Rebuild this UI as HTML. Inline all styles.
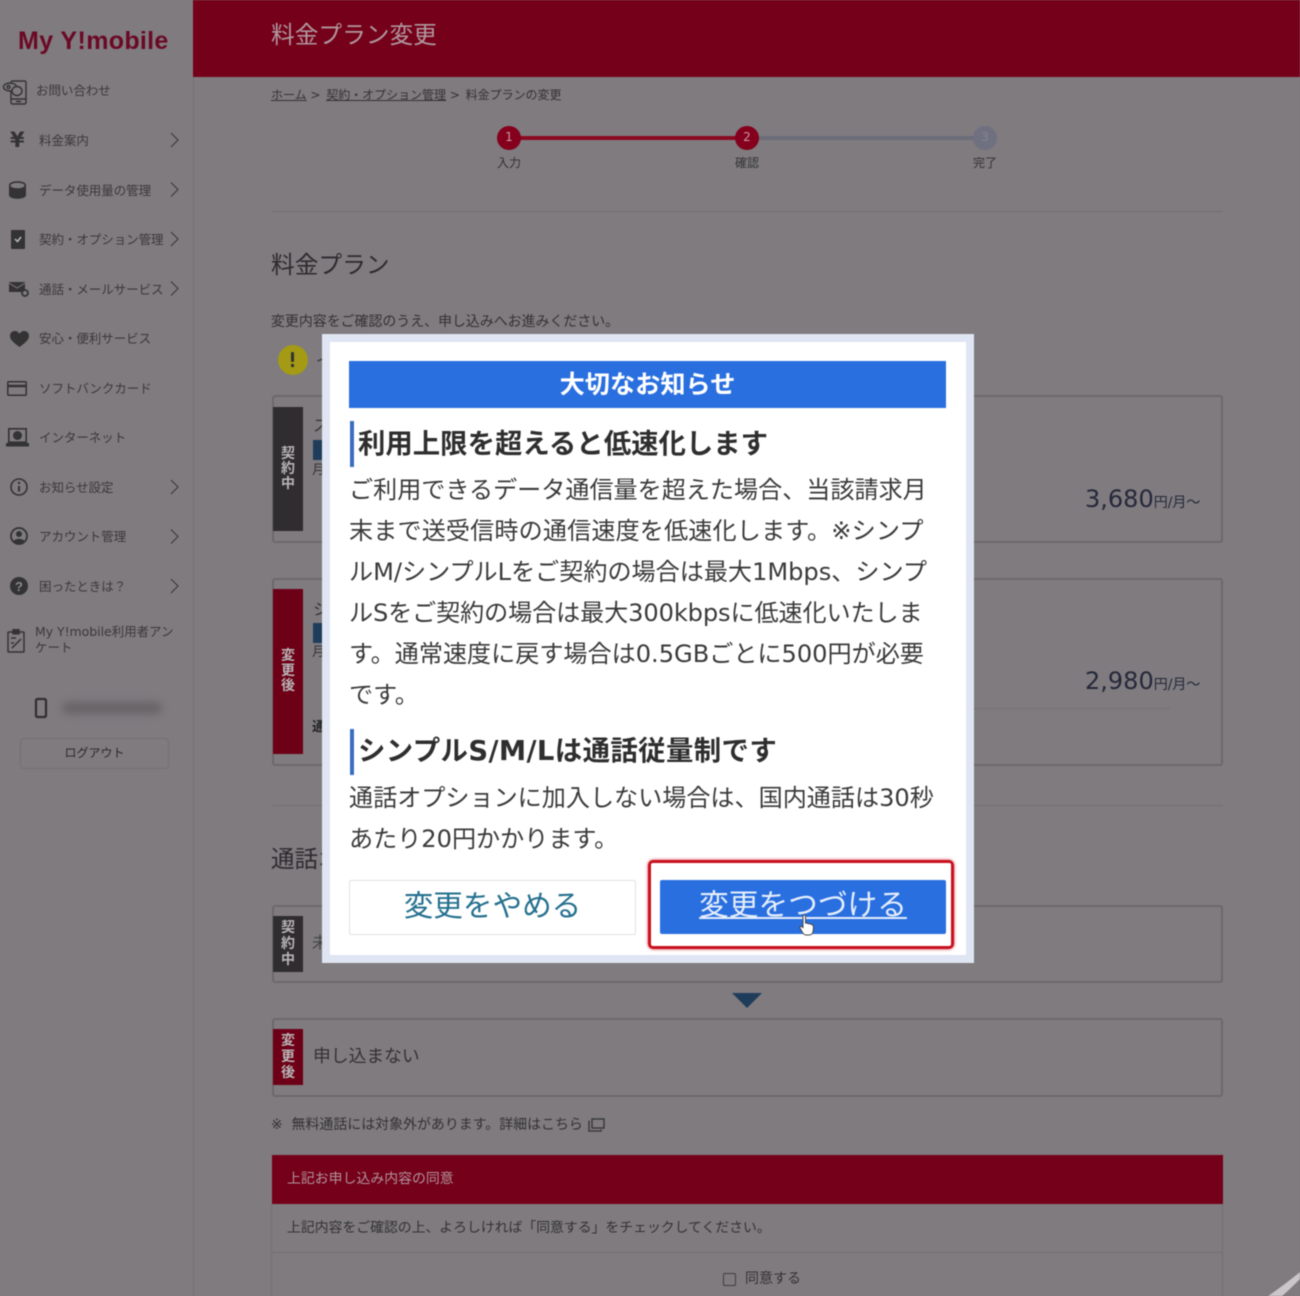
<!DOCTYPE html>
<html lang="ja"><head><meta charset="utf-8"><title>料金プラン変更</title>
<style>
html,body{margin:0;padding:0}
html{background:#7f7b7f}
body{width:1300px;height:1296px;position:relative;overflow:hidden;background:#7f7b7f;font-family:"DejaVu Sans","Noto Sans CJK JP",sans-serif;color:#353336;filter:blur(.4px)}
.t{position:absolute;white-space:nowrap;line-height:1.2;font-family:"DejaVu Sans","Noto Sans CJK JP",sans-serif}
.b{position:absolute;box-sizing:border-box}
.nav{font-size:12.5px;color:#3b393c;letter-spacing:-.05px}
.box{position:absolute;box-sizing:border-box;border:2px solid #6c696d;border-radius:3px;left:272px;width:951px}
.tag{position:absolute;left:273px;width:30px;color:#b7b4b6;font-size:14px;font-weight:700;line-height:15px;text-align:center;display:flex;align-items:center;justify-content:center}
.m{position:absolute;left:349px;white-space:nowrap;font-size:24.1px;line-height:41px;color:#3a3a3a;font-family:"DejaVu Sans","Noto Sans CJK JP",sans-serif}
.h{position:absolute;left:358px;white-space:nowrap;font-size:27.4px;font-weight:700;line-height:40px;color:#2e2e2e}
.bar{position:absolute;left:350px;width:4px;height:46px;background:#3a6dc0}
svg{position:absolute;overflow:visible}
</style></head><body>

<!-- sidebar -->
<div class="b" style="left:193px;top:0;width:1px;height:1296px;background:#757276"></div>
<div class="t" style="left:18px;top:26px;font-size:25px;font-weight:700;color:#6b0925;font-family:'Liberation Sans',sans-serif;letter-spacing:.4px;line-height:30px">My Y!<span style="letter-spacing:.3px">mobile</span></div>

<svg style="left:3px;top:80px" width="24" height="25" viewBox="0 0 24 25" fill="none" stroke="#333" stroke-width="1.4"><rect x="8" y="1" width="15" height="23" rx="1.5"/><path d="M8 19h15M13 21.500h5"/><ellipse cx="7" cy="7" rx="6.500" ry="4" fill="#7f7b7f"/><circle cx="5.500" cy="7" r="1.500"/><ellipse cx="14" cy="11" rx="5" ry="4.500" fill="#7f7b7f"/></svg>
<div class="t nav" style="left:36px;top:83px">お問い合わせ</div>

<div class="t" style="left:10px;top:127px;font-size:21px;color:#333;line-height:26px;font-weight:700">¥</div>
<div class="t nav" style="left:39px;top:133px">料金案内</div>

<svg style="left:9px;top:181px" width="17" height="18" viewBox="0 0 17 18"><path d="M0 4c0-5 17-5 17 0v10c0 5-17 5-17 0z" fill="#333"/><ellipse cx="8.500" cy="4.500" rx="7" ry="2.800" fill="#7f7b7f"/></svg>
<div class="t nav" style="left:39px;top:183px">データ使用量の管理</div>

<svg style="left:11px;top:230px" width="14" height="19" viewBox="0 0 14 19"><rect width="14" height="19" rx="1" fill="#333"/><path d="M4 9l2.500 2.500L10 7" stroke="#bbb" stroke-width="1.500" fill="none"/></svg>
<div class="t nav" style="left:39px;top:232px">契約・オプション管理</div>

<svg style="left:9px;top:282px" width="20" height="15" viewBox="0 0 20 15"><path d="M0 0h16v10H0z" fill="#333"/><path d="M0 1l8 5 8-5" stroke="#7f7b7f" fill="none"/><circle cx="16" cy="11" r="3" fill="#7f7b7f" stroke="#333" stroke-width="1.800"/></svg>
<div class="t nav" style="left:39px;top:282px">通話・メールサービス</div>

<svg style="left:10px;top:331px" width="19" height="16" viewBox="0 0 19 16"><path d="M9.500 16C4 12 0 9 0 4.800 0 2 2.200 0 4.800 0c2 0 3.700 1 4.700 2.800C10.500 1 12.200 0 14.200 0 16.800 0 19 2 19 4.800 19 9 15 12 9.500 16z" fill="#333"/></svg>
<div class="t nav" style="left:39px;top:331px">安心・便利サービス</div>

<svg style="left:7px;top:381px" width="20" height="15" viewBox="0 0 20 15" fill="none" stroke="#333" stroke-width="1.500"><rect x=".8" y=".8" width="18.400" height="13.400" rx="1"/><path d="M1 5h18" stroke-width="2.500"/></svg>
<div class="t nav" style="left:39px;top:381px">ソフトバンクカード</div>

<svg style="left:6px;top:428px" width="23" height="20" viewBox="0 0 23 20"><rect x="2.800" y=".8" width="17.400" height="13.400" fill="none" stroke="#333" stroke-width="1.600"/><circle cx="11.500" cy="7.500" r="4.500" fill="#333"/><rect y="15" width="23" height="3.500" fill="#333"/></svg>
<div class="t nav" style="left:39px;top:430px">インターネット</div>

<svg style="left:10px;top:478px" width="18" height="18" viewBox="0 0 18 18"><circle cx="9" cy="9" r="8" fill="none" stroke="#333" stroke-width="1.600"/><path d="M9 8v5.500" stroke="#333" stroke-width="2"/><circle cx="9" cy="5" r="1.200" fill="#333"/></svg>
<div class="t nav" style="left:39px;top:480px">お知らせ設定</div>

<svg style="left:10px;top:527px" width="18" height="18" viewBox="0 0 18 18"><circle cx="9" cy="9" r="8" fill="none" stroke="#333" stroke-width="1.800"/><circle cx="9" cy="7" r="3" fill="#333"/><path d="M3.500 14.500C4.500 11 13.500 11 14.500 14.500 12 17.500 6 17.500 3.500 14.500z" fill="#333"/></svg>
<div class="t nav" style="left:39px;top:529px">アカウント管理</div>

<svg style="left:10px;top:577px" width="18" height="18" viewBox="0 0 18 18"><circle cx="9" cy="9" r="9" fill="#333"/><text x="9" y="14" text-anchor="middle" font-size="13" font-weight="700" fill="#8b888b" font-family="Liberation Sans">?</text></svg>
<div class="t nav" style="left:39px;top:579px">困ったときは？</div>

<svg style="left:7px;top:629px" width="18" height="24" viewBox="0 0 18 24" fill="none" stroke="#333" stroke-width="1.500"><rect x="1" y="3" width="16" height="20" rx="1"/><rect x="6" y=".8" width="6" height="4" fill="#333"/><path d="M4 9h5M4 14h3M5 19l9-9" /></svg>
<div class="t nav" style="left:35px;top:624px;line-height:16px">My Y!mobile利用者アン<br>ケート</div>

<svg style="left:170px;top:133px" width="8" height="420" viewBox="0 0 8 420" fill="none" stroke="#3b393c" stroke-width="1.100">
<path d="M1 0l7 7-7 7M1 49.500l7 7-7 7M1 99l7 7-7 7M1 148.500l7 7-7 7" />
</svg>
<svg style="left:170px;top:480px" width="8" height="114" viewBox="0 0 8 114" fill="none" stroke="#3b393c" stroke-width="1.100"><path d="M1 0l7 7-7 7M1 49.500l7 7-7 7M1 99l7 7-7 7"/></svg>

<svg style="left:35px;top:698px" width="12" height="20" viewBox="0 0 12 20"><rect x="1" y="1" width="10" height="18" rx="1.500" fill="none" stroke="#2f2e31" stroke-width="2.200"/></svg>
<div class="b" style="left:62px;top:702px;width:100px;height:12px;background:#686467;border-radius:6px;filter:blur(4px)"></div>
<div class="b" style="left:20px;top:738px;width:149px;height:31px;border:1px solid #737074;border-radius:4px"></div>
<div class="t" style="left:20px;top:746px;width:149px;text-align:center;font-size:12px;color:#2a292c">ログアウト</div>

<!-- header -->
<div class="b" style="left:193px;top:0;width:1107px;height:77px;background:#75001a"></div>
<div class="t" style="left:271px;top:20px;font-size:23.7px;color:#b0989f;line-height:30px">料金プラン変更</div>

<!-- breadcrumb -->
<div class="t" style="left:271px;top:87px;font-size:12px;color:#333;line-height:16px;letter-spacing:-.02px"><u>ホーム</u> &gt; <span style="margin-left:2px"><u>契約・オプション管理</u></span> &gt; <span style="margin-left:2px">料金プランの変更</span></div>

<!-- steps -->
<div class="b" style="left:509px;top:136px;width:238px;height:4px;background:#8a0a20"></div>
<div class="b" style="left:747px;top:136px;width:238px;height:4px;background:#6c6d7a"></div>
<div class="b" style="left:497px;top:126px;width:24px;height:24px;border-radius:50%;background:#85001c"></div>
<div class="b" style="left:735px;top:126px;width:24px;height:24px;border-radius:50%;background:#85001c"></div>
<div class="b" style="left:973px;top:126px;width:24px;height:24px;border-radius:50%;background:#6f7080"></div>
<div class="t" style="left:497px;top:130px;width:24px;text-align:center;font-size:12px;color:#c79aa5;line-height:15px">1</div>
<div class="t" style="left:735px;top:130px;width:24px;text-align:center;font-size:12px;color:#c79aa5;line-height:15px">2</div>
<div class="t" style="left:973px;top:130px;width:24px;text-align:center;font-size:12px;color:#84859a;line-height:15px">3</div>
<div class="t" style="left:497px;top:156px;width:24px;text-align:center;font-size:12px;line-height:15px;color:#333">入力</div>
<div class="t" style="left:735px;top:156px;width:24px;text-align:center;font-size:12px;line-height:15px;color:#333">確認</div>
<div class="t" style="left:973px;top:156px;width:24px;text-align:center;font-size:12px;line-height:15px;color:#333">完了</div>

<div class="b" style="left:272px;top:211px;width:951px;height:1px;background:#737074"></div>
<div class="t" style="left:271px;top:249px;font-size:23.7px;line-height:32px;color:#2c2b2e">料金プラン</div>
<div class="t" style="left:271px;top:313px;font-size:13.93px;line-height:18px;color:#333">変更内容をご確認のうえ、申し込みへお進みください。</div>

<!-- warning -->
<div class="b" style="left:278px;top:345px;width:30px;height:30px;border-radius:50%;background:#a49a14"></div>
<div class="b" style="left:291px;top:352px;width:3px;height:10px;background:#333;border-radius:1px"></div>
<div class="b" style="left:291px;top:364px;width:3px;height:3px;background:#333"></div>
<div class="t" style="left:316px;top:351px;font-size:16px;line-height:20px;color:#333">イ</div>

<!-- plan boxes -->
<div class="box" style="top:395px;height:148px"></div>
<div class="tag" style="top:407px;height:124px;background:#2f2d30">契<br>約<br>中</div>
<div class="t" style="left:313px;top:416px;font-size:16px;line-height:20px;color:#333">ス</div>
<div class="b" style="left:313px;top:440px;width:12px;height:20px;background:#1f3d5a"></div>
<div class="t" style="left:1085px;top:484px;font-size:24px;line-height:30px;color:#25283a">3,680<span style="font-size:14px">円/月～</span></div>

<div class="box" style="top:578px;height:188px"></div>
<div class="tag" style="top:589px;height:165px;background:#6d0017">変<br>更<br>後</div>
<div class="t" style="left:313px;top:600px;font-size:16px;line-height:20px;color:#333">シ</div>
<div class="b" style="left:313px;top:623px;width:12px;height:20px;background:#1f3d5a"></div>
<div class="t" style="left:1085px;top:666px;font-size:24px;line-height:30px;color:#25283a">2,980<span style="font-size:14px">円/月～</span></div>
<div class="b" style="left:974px;top:708px;width:196px;border-top:1px dotted #6c696d"></div>
<div class="t" style="left:312px;top:720px;font-size:13px;font-weight:700;color:#222">通</div>
<div class="t" style="left:312px;top:463px;font-size:13px;color:#333">月</div>
<div class="t" style="left:312px;top:645px;font-size:13px;color:#333">月</div>

<div class="b" style="left:272px;top:805px;width:951px;height:1px;background:#737074"></div>
<div class="t" style="left:271px;top:843px;font-size:23.5px;line-height:32px;color:#2c2b2e">通話オプション</div>

<div class="box" style="top:905px;height:78px"></div>
<div class="tag" style="top:916px;height:56px;background:#2f2d30;line-height:16px">契<br>約<br>中</div>
<div class="t" style="left:312px;top:933px;font-size:16px;color:#444">未</div>
<svg style="left:732px;top:993px" width="30" height="15" viewBox="0 0 30 15"><path d="M0 0h30L15 15z" fill="#1f3d5a"/></svg>

<div class="box" style="top:1018px;height:79px"></div>
<div class="tag" style="top:1029px;height:56px;background:#6d0017;line-height:16px">変<br>更<br>後</div>
<div class="t" style="left:313px;top:1045px;font-size:17.8px;line-height:24px;color:#333">申し込まない</div>

<div class="t" style="left:271px;top:1116px;font-size:13.95px;line-height:18px;color:#333">※ &nbsp;無料通話には対象外があります。詳細はこちら</div>
<svg style="left:588px;top:1118px" width="17" height="14" viewBox="0 0 17 14" fill="none" stroke="#333" stroke-width="1.300"><rect x="4" y="1" width="12" height="9"/><path d="M2 3.500H1V13h12v-1.500"/></svg>

<div class="b" style="left:272px;top:1155px;width:951px;height:49px;background:#75001a"></div>
<div class="t" style="left:287px;top:1170px;font-size:13.9px;line-height:18px;color:#b0939a">上記お申し込み内容の同意</div>
<div class="b" style="left:271px;top:1204px;width:1px;height:92px;background:#737074"></div>
<div class="b" style="left:1222px;top:1204px;width:1px;height:92px;background:#737074"></div>
<div class="t" style="left:287px;top:1219px;font-size:13.85px;line-height:18px;color:#333">上記内容をご確認の上、よろしければ「同意する」をチェックしてください。</div>
<div class="b" style="left:272px;top:1252px;width:951px;height:1px;background:#737074"></div>
<div class="b" style="left:723px;top:1273px;width:13px;height:13px;border:1px solid #3f3d40;border-radius:2px"></div>
<div class="t" style="left:745px;top:1270px;font-size:14px;line-height:18px;color:#333">同意する</div>
<svg style="left:1268px;top:1272px" width="32" height="24" viewBox="0 0 32 24"><path d="M0 24C12 16 22 8 32 0v7C26 13 20 19 14 24z" fill="#c9c7c9"/></svg>

<!-- modal -->
<div class="b" style="left:322px;top:334px;width:652px;height:629px;background:#fff;border:8px solid #dfe5f3"></div>
<div class="b" style="left:349px;top:361px;width:597px;height:47px;background:#2a6fe0"></div>
<div class="t" style="left:349px;top:369px;width:597px;text-align:center;font-size:25.2px;font-weight:700;line-height:32px;color:#fff">大切なお知らせ</div>

<div class="bar" style="top:421px"></div>
<div class="h" style="top:425px">利用上限を超えると低速化します</div>
<div class="m" style="top:470px">ご利用できるデータ通信量を超えた場合、当該請求月</div>
<div class="m" style="top:511px;letter-spacing:.14px">末まで送受信時の通信速度を低速化します。※シンプ</div>
<div class="m" style="top:552px">ルM/シンプルLをご契約の場合は最大1Mbps、シンプ</div>
<div class="m" style="top:593px;letter-spacing:-.1px">ルSをご契約の場合は最大300kbpsに低速化いたしま</div>
<div class="m" style="top:634px">す。通常速度に戻す場合は0.5GBごとに500円が必要</div>
<div class="m" style="top:675px">です。</div>
<div class="bar" style="top:729px"></div>
<div class="h" style="top:732px;letter-spacing:.4px">シンプルS/M/Lは通話従量制です</div>
<div class="m" style="top:778px">通話オプションに加入しない場合は、国内通話は30秒</div>
<div class="m" style="top:819px">あたり20円かかります。</div>

<div class="b" style="left:349px;top:880px;width:287px;height:55px;background:#fff;border:1px solid #e2e2e2;border-radius:2px"></div>
<div class="t" style="left:349px;top:885px;width:287px;text-align:center;font-size:29.6px;line-height:42px;color:#24708f">変更をやめる</div>
<div class="b" style="left:648px;top:860px;width:306px;height:89px;border:3.5px solid #c8101e;border-radius:5px;box-shadow:0 0 3px #d8404a"></div>
<div class="b" style="left:660px;top:880px;width:286px;height:54px;background:#2a6fe0;border-radius:2px"></div>
<div class="t" style="left:660px;top:885px;width:286px;text-align:center;font-size:29.7px;line-height:42px;color:#e6effb"><u>変更をつづける</u></div>
<svg style="left:799px;top:914px" width="16" height="22" viewBox="0 0 16 22"><path d="M4 1.500c1-1 2.500-.5 2.500 1V9l5 1c2 .5 3 1.500 3 3l-.5 5c-.5 2-2 3-4 3H7c-1.500 0-2.500-1-3.500-2.500L1 14c-.5-1 1-2.500 2.500-1L4 14z" fill="#fff" stroke="#444" stroke-width="1"/></svg>
</body></html>
